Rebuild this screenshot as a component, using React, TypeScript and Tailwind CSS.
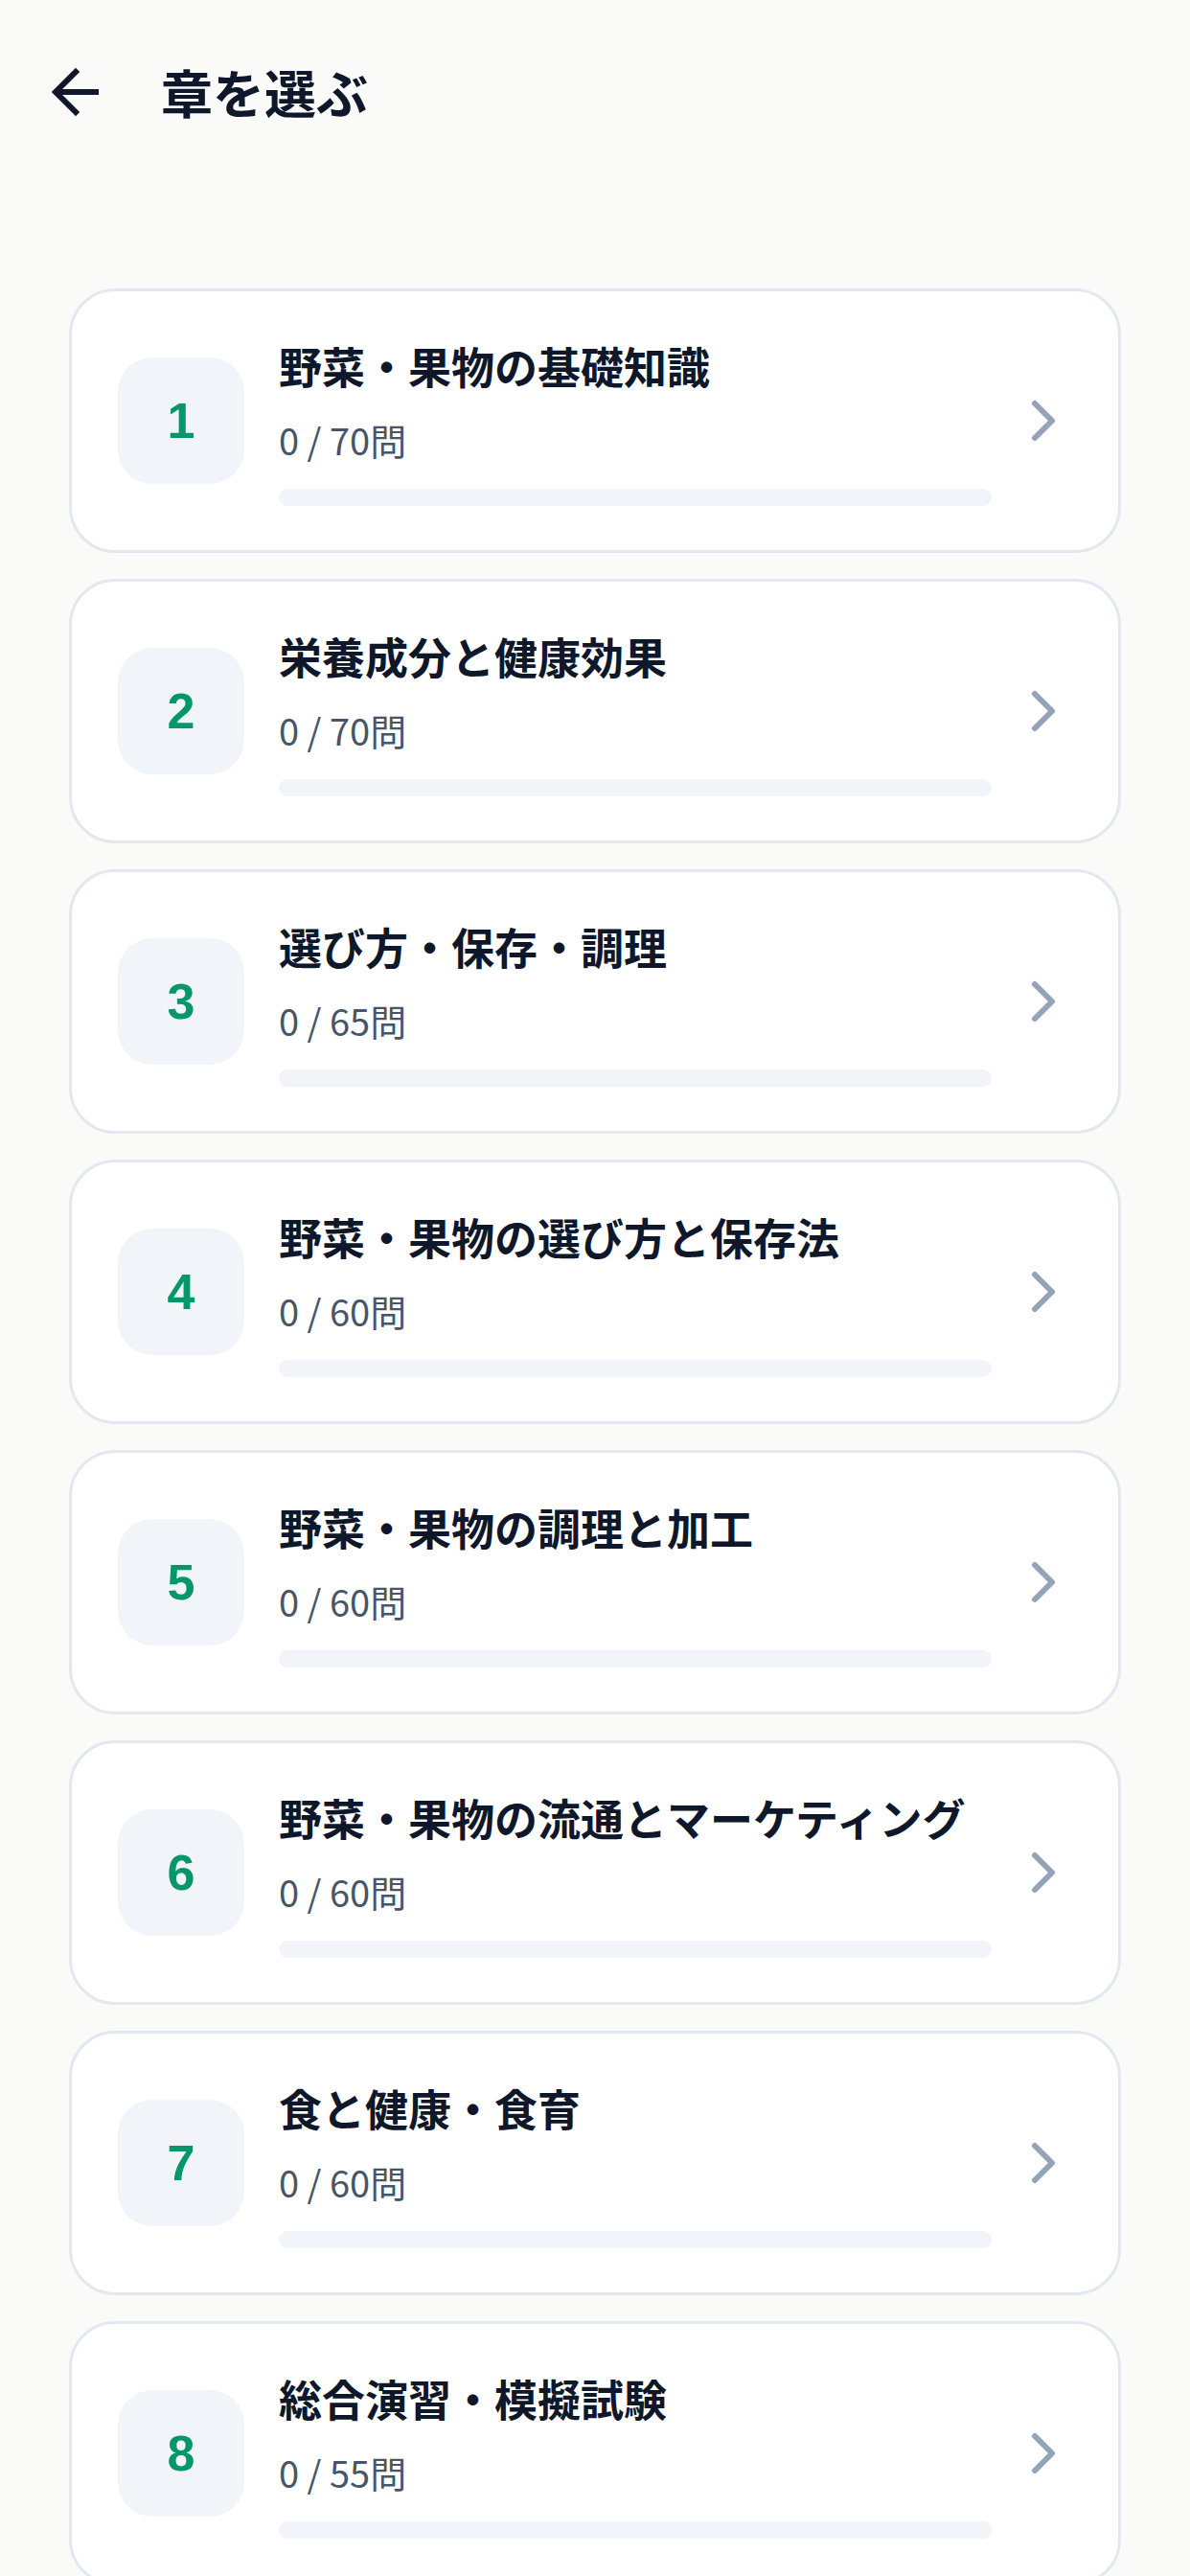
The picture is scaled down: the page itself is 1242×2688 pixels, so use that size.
import React from "react";

const chapters = [
  { n: 1, title: "野菜・果物の基礎知識", total: 70 },
  { n: 2, title: "栄養成分と健康効果", total: 70 },
  { n: 3, title: "選び方・保存・調理", total: 65 },
  { n: 4, title: "野菜・果物の選び方と保存法", total: 60 },
  { n: 5, title: "野菜・果物の調理と加工", total: 60 },
  { n: 6, title: "野菜・果物の流通とマーケティング", total: 60 },
  { n: 7, title: "食と健康・食育", total: 60 },
  { n: 8, title: "総合演習・模擬試験", total: 55 },
];

const jp = { fontFamily: '"Noto Sans CJK JP", "Noto Sans", sans-serif' };

function ArrowLeft() {
  return (
    <svg width="72" height="72" viewBox="0 0 24 24" fill="none" stroke="#0f172a" strokeWidth="2" strokeLinecap="square" strokeLinejoin="miter">
      <path d="m12 19-7-7 7-7" />
      <path d="M19 12H5.5" />
    </svg>
  );
}

function ChevronRight() {
  return (
    <svg width="72" height="72" viewBox="0 0 24 24" fill="none" stroke="#94a3b8" strokeWidth="2" strokeLinecap="round" strokeLinejoin="round">
      <path d="m9 18 6-6-6-6" />
    </svg>
  );
}

export default function App() {
  return (
    <div className="min-h-[2688px] w-[1242px] bg-[#fafaf9] pt-[60px]" style={jp}>
      <div className="flex h-[72px] items-center pl-[43px]">
        <ArrowLeft />
        <h1 className="ml-[53px] text-[54px] font-bold leading-none text-[#0f172a]">章を選ぶ</h1>
      </div>
      <div className="mt-[169px] flex flex-col gap-[27px] px-[72px]">
        {chapters.map((c) => (
          <div
            key={c.n}
            className="flex h-[276px] items-center rounded-[48px] border-[3px] border-[#e2e8f0] bg-white pl-[48px] pr-[42px]"
          >
            <div className="flex h-[132px] w-[132px] shrink-0 items-center justify-center rounded-[36px] bg-[#f1f5f9]">
              <span
                className="text-[52px] font-bold leading-none text-[#059669]"
                style={{ fontFamily: '"Liberation Sans", Arial, sans-serif' }}
              >
                {c.n}
              </span>
            </div>
            <div className="ml-[36px] mt-[5px] flex w-[744px] flex-col">
              <div className="text-[45px] font-bold leading-[54px] text-[#0f172a] whitespace-nowrap">{c.title}</div>
              <div className="mt-[26px] text-[38px] leading-[48px] text-[#475569]">0 / {c.total}問</div>
              <div className="mt-[27px] h-[18px] w-full rounded-full bg-[#f1f5f9]" />
            </div>
            <div className="ml-[18px] shrink-0">
              <ChevronRight />
            </div>
          </div>
        ))}
      </div>
    </div>
  );
}
